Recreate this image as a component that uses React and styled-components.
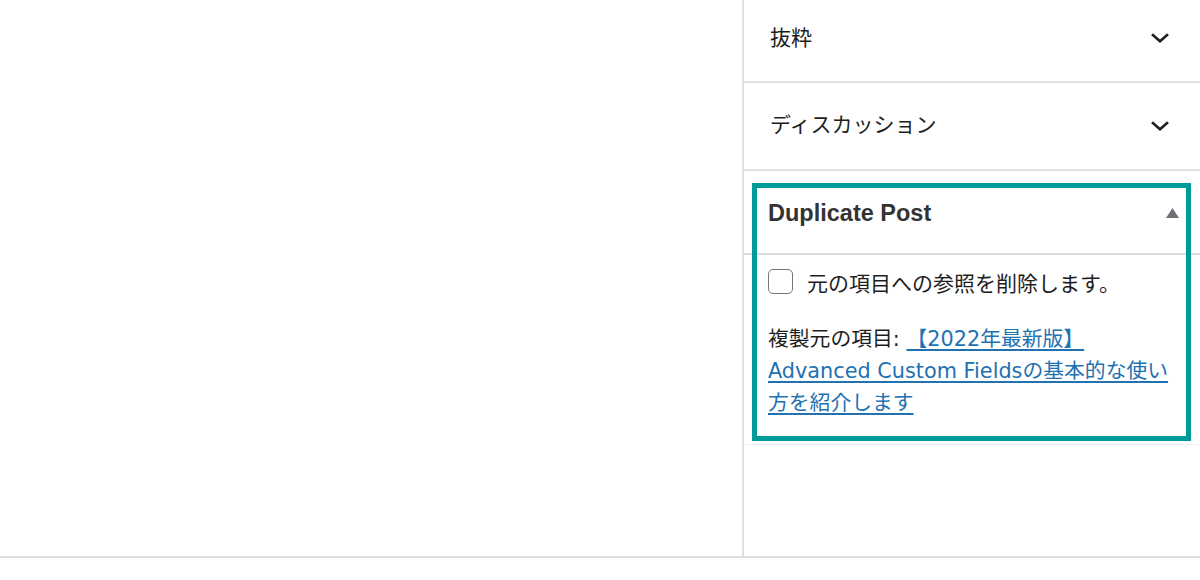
import React from "react"
import styled, { createGlobalStyle } from "styled-components"

const GlobalStyle = createGlobalStyle`
  html, body {
    margin: 0;
    padding: 0;
    background: #fff;
  }
  body {
    font-family: "DejaVu Sans", "Noto Sans CJK JP", sans-serif;
    color: #1e1e1e;
  }
`

const Page = styled.div`
  width: 1200px;
  height: 580px;
  display: flex;
  flex-direction: column;
  background: #fff;
`

const Editor = styled.div`
  display: flex;
  height: 556px;
  border-bottom: 2px solid #dedede;
`

const Canvas = styled.div`
  flex: 1;
  background: #fff;
`

const Sidebar = styled.aside`
  width: 456px;
  border-left: 2px solid #e0e0e0;
  display: flex;
  flex-direction: column;
`

const PanelRow = styled.div`
  box-sizing: border-box;
  height: ${(p) => p.$height}px;
  padding: 0 30px ${(p) => p.$shift || 0}px 26px;
  display: flex;
  align-items: center;
  justify-content: space-between;
  border-bottom: 2px solid #e0e0e0;
  font-family: "Noto Sans CJK JP", sans-serif;
  font-size: 21px;
  color: #1e1e1e;
`

const RowLabel = styled.span`
  margin-bottom: 5px;
`

const Chevron = () => (
  <svg width="20" height="12" viewBox="0 0 20 12">
    <path
      d="M2 2.2 L10 9.2 L18 2.2"
      fill="none"
      stroke="#1e1e1e"
      strokeWidth="2.6"
    />
  </svg>
)

const Panel = styled.section`
  position: relative;
  border-bottom: 1px solid #f1f1f1;
`

const PanelHeader = styled.div`
  height: 84px;
  padding: 2px 21px 0 24px;
  box-sizing: border-box;
  display: flex;
  align-items: center;
  justify-content: space-between;
  border-bottom: 2px solid #dcdcdc;
`

const PanelTitle = styled.h2`
  margin: 0;
  font-family: "Liberation Sans", "Noto Sans CJK JP", sans-serif;
  font-weight: 700;
  font-size: 23.5px;
  color: #333;
`

const Caret = () => (
  <svg width="13" height="10" viewBox="0 0 13 10">
    <polygon points="6.5,0 13,10 0,10" fill="#6d7076" />
  </svg>
)

const PanelBody = styled.div`
  padding: 13px 24px 25px 24px;
  font-size: 20.8px;
`

const CheckRow = styled.label`
  display: flex;
  align-items: center;
  gap: 14px;
  height: 27px;
  font-family: "Noto Sans CJK JP", sans-serif;
  font-size: 21px;
`

const Box = styled.span`
  width: 25px;
  height: 25px;
  box-sizing: border-box;
  border: 1.5px solid #757575;
  border-radius: 5px;
  background: #fff;
  flex-shrink: 0;
`

const Origin = styled.p`
  margin: 28px 0 0;
  line-height: 32px;
`

const Link = styled.a`
  color: #2271b1;
  text-decoration: underline;
  text-underline-offset: 3px;
  text-decoration-thickness: 1.5px;
`

// teal frame drawn over the Duplicate Post panel
const Highlight = styled.div`
  position: absolute;
  top: 12px;
  left: 8px;
  right: 9px;
  bottom: 3px;
  border: 5px solid #009a9a;
  pointer-events: none;
`

export default function App() {
  return (
    <>
      <GlobalStyle />
      <Page>
        <Editor>
          <Canvas />
          <Sidebar>
            <PanelRow $height={83} $shift={5}>
              <RowLabel>抜粋</RowLabel>
              <Chevron />
            </PanelRow>
            <PanelRow $height={88} $shift={1}>
              <RowLabel>ディスカッション</RowLabel>
              <Chevron />
            </PanelRow>
            <Panel>
              <PanelHeader>
                <PanelTitle>Duplicate Post</PanelTitle>
                <Caret />
              </PanelHeader>
              <PanelBody>
                <CheckRow>
                  <Box />
                  元の項目への参照を削除します。
                </CheckRow>
                <Origin>
                  複製元の項目:{" "}
                  <Link href="#">
                    【2022年最新版】 Advanced Custom Fieldsの基本的な使い方を紹介します
                  </Link>
                </Origin>
              </PanelBody>
              <Highlight />
            </Panel>
          </Sidebar>
        </Editor>
      </Page>
    </>
  )
}
